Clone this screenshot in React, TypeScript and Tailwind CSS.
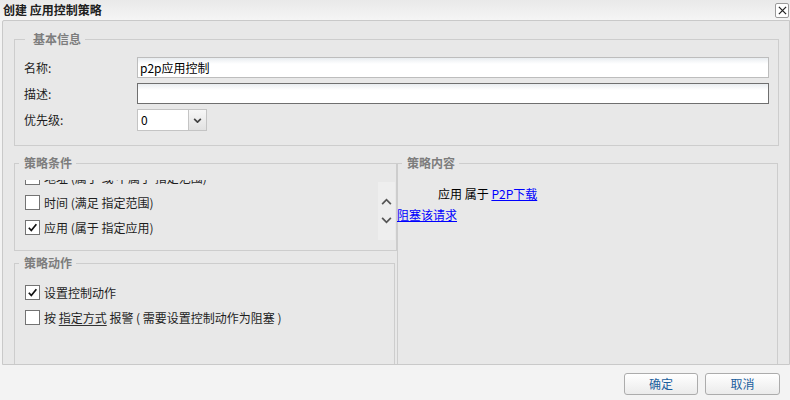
import { ReactNode } from 'react'

function Check({ checked }: { checked?: boolean }) {
  return (
    <span className="flex h-[15px] w-[15px] shrink-0 items-center justify-center border border-[#737373] bg-white">
      {checked && (
        <svg viewBox="0 0 12 12" className="h-[11px] w-[11px]">
          <path d="M2 6.3 L4.7 9.3 L10.2 2.4" fill="none" stroke="#111" strokeWidth="1.9" />
        </svg>
      )}
    </span>
  )
}

function Row({ checked, children }: { checked?: boolean; children: ReactNode }) {
  return (
    <div className="flex h-[25px] items-center gap-[4px] pl-[10px] whitespace-nowrap">
      <Check checked={checked} />
      <span>{children}</span>
    </div>
  )
}

function Legend({ children, wide }: { children: ReactNode; wide?: boolean }) {
  return (
    <legend
      className={
        wide
          ? 'ml-[10px] pl-[8px] pr-[4px] text-[12px] leading-[16px] font-bold text-[#7d7d7d]'
          : 'ml-[4px] pl-[5px] pr-[4px] text-[12px] leading-[16px] font-bold text-[#7d7d7d]'
      }
    >
      {children}
    </legend>
  )
}

export default function App() {
  return (
    <div className="flex h-[400px] w-[790px] flex-col overflow-hidden bg-[#f3f3f3] font-['Noto_Sans_CJK_SC','Noto_Sans',sans-serif] text-[12px] text-[#1e1e1e]">
      {/* title bar */}
      <div className="flex h-[20px] shrink-0 items-center justify-between bg-gradient-to-b from-[#e9e9e9] to-[#f5f5f5] pl-[3px]">
        <span className="text-[12px] leading-[16px] font-bold text-[#202020]">创建 应用控制策略</span>
        <button className="mr-[1px] flex h-[15px] w-[14px] items-center justify-center rounded-[2px] border border-[#9a9a9a] bg-white">
          <svg viewBox="0 0 10 10" className="h-[9px] w-[9px]">
            <path d="M1 1 L9 9 M9 1 L1 9" stroke="#222" strokeWidth="1.4" />
          </svg>
        </button>
      </div>

      {/* main panel */}
      <div className="ml-[2px] h-[345px] w-[788px] shrink-0 overflow-hidden rounded-tl-[2px] border border-[#c9c9c9] bg-[#e8e8e8]">
        <fieldset className="mt-[10px] mr-[10px] ml-[11px] h-[115px] border border-[#cdcdcd]">
          <Legend wide>基本信息</Legend>
          <div className="flex flex-col gap-[5px] pt-[10px] pr-[9px] pl-[9px]">
            <div className="flex h-[21px] items-center">
              <span className="w-[113px] shrink-0">名称:</span>
              <div className="flex h-[21px] flex-1 items-center border border-[#bdbdbd] bg-[linear-gradient(to_bottom,#e9edf0,#ffffff_6px)] pl-[2px] text-black">
                p2p应用控制
              </div>
            </div>
            <div className="flex h-[21px] items-center">
              <span className="w-[113px] shrink-0">描述:</span>
              <div className="h-[21px] flex-1 border border-[#6f6f6f] bg-[linear-gradient(to_bottom,#e9edf0,#ffffff_6px)]" />
            </div>
            <div className="flex h-[22px] items-center">
              <span className="w-[113px] shrink-0">优先级:</span>
              <div className="flex h-[22px] w-[70px] border border-[#c4c4c4] bg-white">
                <span className="flex flex-1 items-center pl-[3px] text-black">0</span>
                <span className="flex w-[18px] items-center justify-center border-l border-[#c4c4c4] bg-gradient-to-b from-[#f7f7f7] to-[#e2e2e2]">
                  <svg viewBox="0 0 10 6" className="h-[5px] w-[9px]">
                    <path d="M1 1 L5 5 L9 1" fill="none" stroke="#444" strokeWidth="2" />
                  </svg>
                </span>
              </div>
            </div>
          </div>
        </fieldset>

        <div className="mt-[9px] ml-[11px] flex items-start">
          <div className="flex w-[383px] shrink-0 flex-col">
            <fieldset className="h-[96px] border border-[#cdcdcd]">
              <Legend>策略条件</Legend>
              <div className="mt-[9px] flex">
                <div className="h-[60px] flex-1 overflow-hidden">
                  <div className="-mt-[15px]">
                    <Row>地址 (属于 或 不属于 指定范围)</Row>
                    <Row>时间 (满足 指定范围)</Row>
                    <Row checked>应用 (属于 指定应用)</Row>
                  </div>
                </div>
                <div className="mt-[2px] mr-[1px] flex h-[58px] w-[17px] flex-col items-center justify-center gap-[12px] bg-[#eeeeee]">
                  <svg viewBox="0 0 12 8" className="h-[7px] w-[11px]">
                    <path d="M1 7 L6 2 L11 7" fill="none" stroke="#555" strokeWidth="2" />
                  </svg>
                  <svg viewBox="0 0 12 8" className="h-[7px] w-[11px]">
                    <path d="M1 1 L6 6 L11 1" fill="none" stroke="#555" strokeWidth="2" />
                  </svg>
                </div>
              </div>
            </fieldset>
            <fieldset className="mt-[4px] mr-[2px] h-[130px] border border-[#cdcdcd]">
              <Legend>策略动作</Legend>
              <div className="pt-[9px]">
                <Row checked>设置控制动作</Row>
                <Row>
                  按 <span className="underline decoration-[#333] underline-offset-[2px]">指定方式</span> 报警 ( 需要设置控制动作为阻塞 )
                </Row>
              </div>
            </fieldset>
          </div>

          <fieldset className="mr-[11px] h-[230px] flex-1 border border-[#cdcdcd]">
            <Legend>策略内容</Legend>
            <div className="pt-[13px]">
              <div className="flex h-[20px] items-center pl-[40px] text-black">
                应用 属于&nbsp;<span className="text-[#0000ff] underline">P2P下载</span>
              </div>
              <div className="-ml-[1px] flex h-[21px] items-center">
                <span className="text-[#0000ff] underline">阻塞该请求</span>
              </div>
            </div>
          </fieldset>
        </div>
      </div>

      {/* footer */}
      <div className="flex flex-1 items-start justify-end gap-[7px] pt-[8px] pr-[10px]">
        <button className="h-[22px] w-[74px] rounded-[3px] border border-[#acacac] bg-gradient-to-b from-white to-[#ebebeb] text-[12px] text-[#1b5e9e]">
          确定
        </button>
        <button className="h-[22px] w-[75px] rounded-[3px] border border-[#acacac] bg-gradient-to-b from-white to-[#ebebeb] text-[12px] text-[#1b5e9e]">
          取消
        </button>
      </div>
    </div>
  )
}
